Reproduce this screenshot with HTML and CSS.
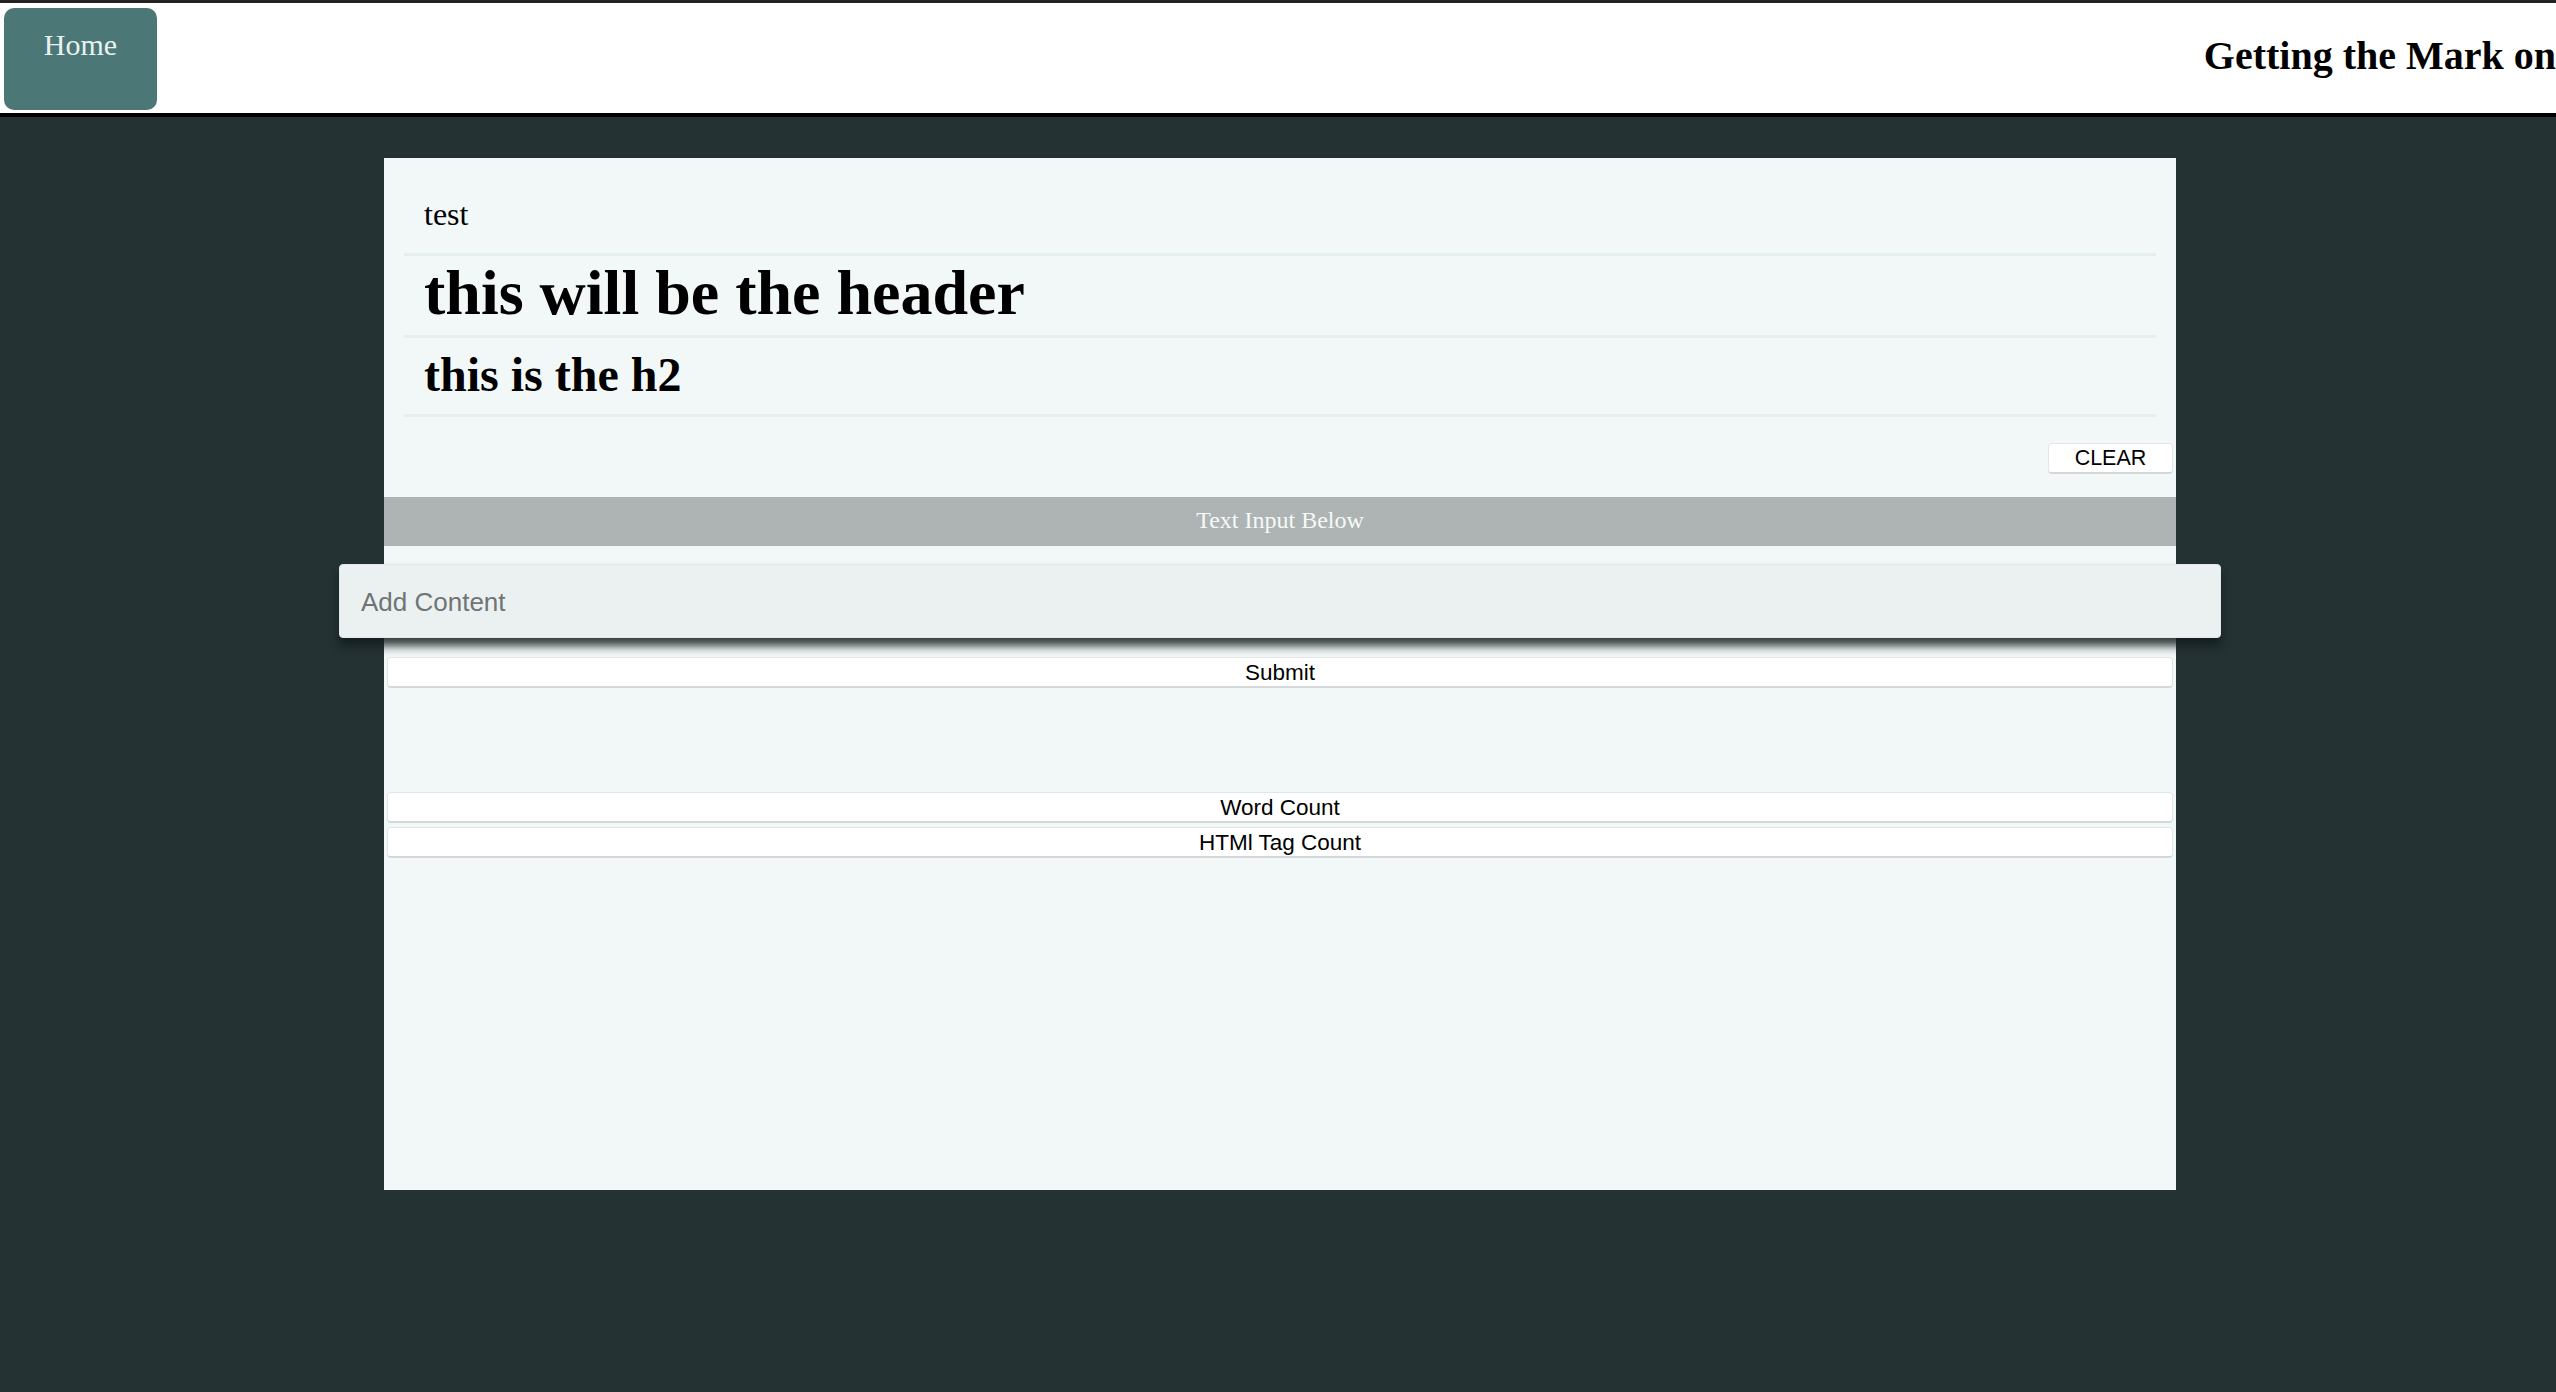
FILE: index.html
```html
<!DOCTYPE html>
<html lang="en">
<head>
<meta charset="utf-8">
<title>Getting the Mark on</title>
<link rel="stylesheet" href="styles.css">
</head>
<body>
<header class="topbar">
  <div class="home-btn">Home</div>
  <h1 class="site-title">Getting the Mark on</h1>
</header>
<main class="card">
  <div class="preview">
    <p class="item item-p">test</p>
    <h1 class="item item-h1">this will be the header</h1>
    <h2 class="item item-h2">this is the h2</h2>
  </div>
  <div class="clear-row">
    <button class="btn btn-clear">CLEAR</button>
  </div>
  <div class="input-bar">Text Input Below</div>
  <input class="content-input" type="text" placeholder="Add Content">
  <button class="btn btn-wide btn-submit">Submit</button>
  <button class="btn btn-wide btn-word">Word Count</button>
  <button class="btn btn-wide btn-tag">HTMl Tag Count</button>
</main>
</body>
</html>
```

FILE: styles.css
```css
html, body {
  margin: 0;
  padding: 0;
}

body {
  background: #253234;
  min-height: 100vh;
  overflow: hidden;
  font-family: "Liberation Serif", "Times New Roman", serif;
}

.topbar {
  display: flex;
  align-items: flex-start;
  height: 110px;
  background: #ffffff;
  border-top: 3px solid #232323;
  border-bottom: 4px solid #000000;
  overflow: hidden;
}

.home-btn {
  box-sizing: border-box;
  width: 153px;
  height: 102px;
  margin: 5px 0 0 4px;
  padding-top: 20px;
  background: #4b7776;
  border-radius: 10px;
  color: #e9f1f1;
  font-size: 30px;
  line-height: 1.15;
  text-align: center;
  flex: none;
}

.site-title {
  margin: 30px 0 0 auto;
  font-size: 40px;
  font-weight: bold;
  line-height: 1.15;
  white-space: nowrap;
  color: #000;
}

.card {
  box-sizing: border-box;
  width: 1792px;
  height: 1032px;
  margin: 41px 0 0 384px;
  background: #f2f8f8;
  display: flex;
  flex-direction: column;
}

.preview {
  padding: 0 20px;
}

.item {
  margin: 0;
  padding: 0 20px;
  line-height: 1.15;
  color: #000;
  border-bottom: 3px solid #e6eff0;
}

.item-p {
  font-size: 32px;
  padding-top: 38px;
  padding-bottom: 20px;
}

.item-h1 {
  font-size: 64px;
  font-weight: bold;
  padding-top: 0;
  padding-bottom: 6px;
}

.item-h2 {
  font-size: 48px;
  font-weight: bold;
  padding-top: 9px;
  padding-bottom: 11px;
}

.clear-row {
  display: flex;
  justify-content: flex-end;
  padding: 26px 3px 0 0;
}

.btn {
  box-sizing: border-box;
  background: #ffffff;
  border: 1px solid #e3e6e6;
  border-bottom: 2px solid #d5d8d8;
  border-radius: 4px;
  color: #000;
  font-family: "Liberation Sans", Arial, sans-serif;
  font-size: 22px;
  line-height: 1;
  padding: 3px 0 0;
  height: 31px;
  cursor: pointer;
}

.btn-clear {
  width: 125px;
  font-size: 21.5px;
}

.input-bar {
  box-sizing: border-box;
  height: 49px;
  margin-top: 23px;
  background: #adb4b3;
  color: #f7f9f9;
  font-size: 24px;
  line-height: 46px;
  text-align: center;
}

.content-input {
  box-sizing: border-box;
  width: 1882px;
  height: 74px;
  margin: 18px 0 0 -45px;
  padding: 3px 21px 0;
  border: 1px solid #e4eaea;
  border-radius: 4px;
  background: #ebf1f1;
  font-family: "Liberation Sans", Arial, sans-serif;
  font-size: 26px;
  color: #333;
  box-shadow: 0 8px 10px rgba(18, 28, 28, 0.85);
  outline: none;
  position: relative;
  z-index: 1;
}

.content-input::placeholder {
  color: #707474;
}

.btn-wide {
  width: 1786px;
  margin: 0 3px;
  font-size: 22.5px;
}

.btn-submit {
  margin-top: 19px;
}

.btn-word {
  margin-top: 104px;
}

.btn-tag {
  margin-top: 4px;
}
```
